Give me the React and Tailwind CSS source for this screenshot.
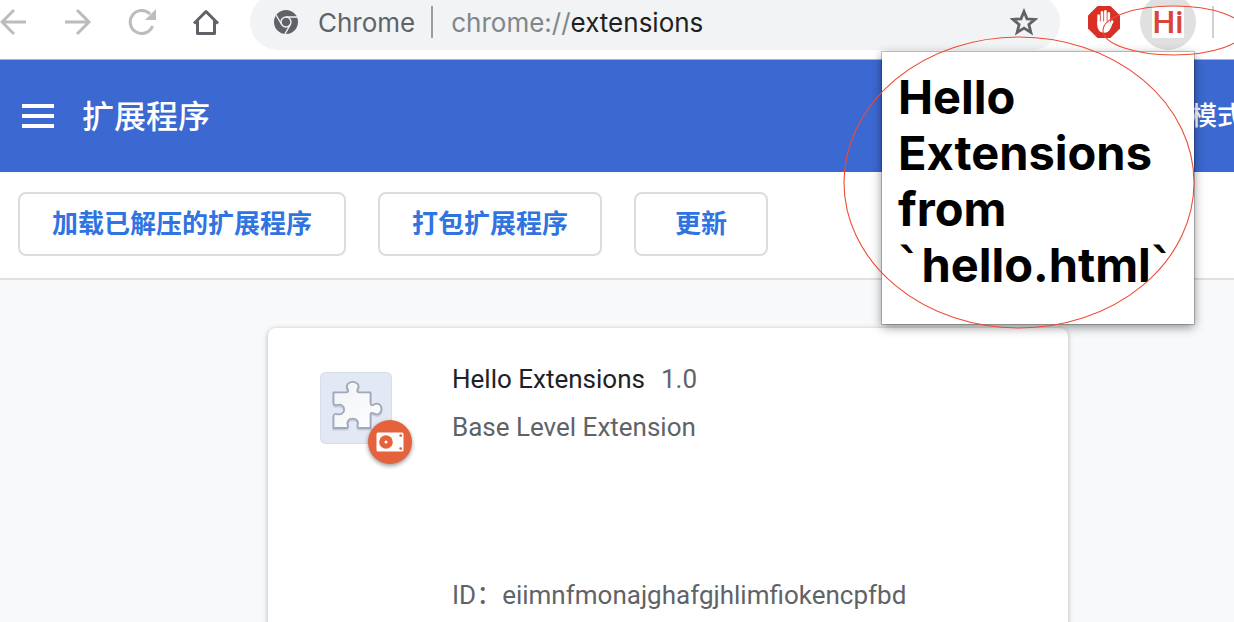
import React from 'react';

const actions = [
  { label: '加载已解压的扩展程序' },
  { label: '打包扩展程序' },
  { label: '更新' },
];

const NavIcon = ({ label, className, children }) => (
  <button type="button" aria-label={label} className={`h-7 w-7 shrink-0 ${className}`}>
    <svg viewBox="0 0 28 28" className="h-7 w-7" fill="none" stroke="currentColor" strokeWidth="3">
      {children}
    </svg>
  </button>
);

const ChromeIcon = () => (
  <svg viewBox="0 0 24 24" className="h-6 w-6 shrink-0" aria-hidden="true">
    <circle cx="12" cy="12" r="12" fill="#5f6368" />
    <g fill="none" stroke="#f1f3f4" strokeWidth="1.4">
      <circle cx="12" cy="12" r="5" />
      <path d="M12 7H23M7.7 14.5L2 5M16.3 14.5L11 24" />
    </g>
  </svg>
);

const StopHandIcon = () => (
  <svg viewBox="0 0 32 32" className="h-8 w-8" aria-hidden="true">
    <path d="M9.5 0h13L32 9.5v13L22.5 32h-13L0 22.5v-13z" fill="#d93025" />
    <g stroke="#fff" strokeWidth="2.6" strokeLinecap="round" fill="none">
      <path d="M10.600 18V9.500M14 17V6.200M17.400 17V5.200M20.800 17V7.400" />
      <path d="M24.200 15.600L21 21.500" />
    </g>
    <path d="M9.300 15.500h12.800v3.300l2.400-2.300c-1.200 4.500-2.600 10.200-8 10.200-5.800 0-7.200-4.200-7.200-8.200z" fill="#fff" />
  </svg>
);

const PUZZLE_PATH =
  'M13.5 20.3H26C28.600 20.300 28.600 18.800 27.700 17.300C25.300 13.300 28.300 9.800 32.700 9.800C37.100 9.800 40.100 13.300 37.700 17.300C36.800 18.800 36.800 20.300 39.400 20.300H50.500V31C50.500 33.800 52.200 33.600 53.900 32.600C57.700 30.200 61.500 32.800 61.500 37C61.500 41.200 57.700 43.800 53.900 41.400C52.200 40.400 50.500 40.400 50.500 43V56H40C37.300 56 37.200 54.800 37.600 53.300C38.900 49.300 36.800 46.700 32.700 46.700C28.600 46.700 26.500 49.300 27.800 53.300C28.200 54.800 28.100 56 25.400 56H13.500V44.500C13.500 42 15 41.600 16.700 42.100C21 43.200 24.200 41.200 24.200 37.500C24.200 33.800 21 31.900 16.700 33C15 33.500 13.500 33.200 13.500 30.600Z';

const PuzzleIcon = () => (
  <svg viewBox="0 0 72 72" className="h-full w-full" aria-hidden="true">
    <defs>
      <linearGradient id="puzzle" x1="0" y1="0" x2="1" y2="1">
        <stop offset="0" stopColor="#eff2f7" />
        <stop offset="1" stopColor="#ffffff" />
      </linearGradient>
    </defs>
    <path d={PUZZLE_PATH} fill="#7f8fab" stroke="#7f8fab" strokeWidth="2" opacity="0.3" transform="translate(0 1.5)" />
    <path d={PUZZLE_PATH} fill="url(#puzzle)" stroke="#a1a9b8" strokeWidth="1.800" strokeLinejoin="round" />
  </svg>
);

const UnpackedBadge = () => (
  <span className="absolute -right-5 -bottom-5 flex h-11 w-11 items-center justify-center rounded-full bg-[#e4633c] shadow-[0_2px_4px_rgba(0,0,0,0.4)]">
    <svg viewBox="0 0 28 20" className="h-5 w-7" aria-hidden="true">
      <rect x="0.500" y="0.500" width="27" height="19" rx="1.500" fill="#fff" />
      <circle cx="10" cy="10" r="6.800" fill="#e4633c" />
      <circle cx="10" cy="10" r="1.500" fill="#fff" />
      <circle cx="24.700" cy="3.600" r="1.400" fill="#e4633c" />
      <circle cx="24.700" cy="16.600" r="1.400" fill="#e4633c" />
    </svg>
  </span>
);

const BrowserBar = () => (
  <div className="border-b border-[#b4b5b7] bg-white pb-[15px]">
    <div className="flex h-11 items-center">
      <nav className="flex gap-9">
        <NavIcon label="后退" className="text-[#babcbe]">
          <path d="M27 14H3M15 2L3 14L15 26" transform="translate(-1 0)" />
        </NavIcon>
        <NavIcon label="前进" className="text-[#babcbe]">
          <path d="M1 14H25M13 2L25 14L13 26" />
        </NavIcon>
        <NavIcon label="重新加载" className="text-[#babcbe]">
          <path d="M24.500 18A11.500 11.500 0 1 1 22 6" />
          <path d="M28 1V12H17z" fill="currentColor" stroke="none" />
        </NavIcon>
        <NavIcon label="主页" className="text-[#5f6368]">
          <path d="M2 15.500L14 3.500L26 15.500M5.500 13V25.500H22.500V13" strokeLinejoin="round" />
        </NavIcon>
      </nav>
      <div className="ml-[30px] flex h-14 min-w-0 flex-1 items-center rounded-full bg-[#f1f3f4] pr-[22px] pl-6 font-['Inter',sans-serif] text-[26px] leading-8">
        <ChromeIcon />
        <span className="ml-5 pt-0.5 text-[#5f6368]">Chrome</span>
        <span className="mr-[18px] ml-4 h-8 w-0.5 shrink-0 bg-[#9b9da0]" />
        <span className="pt-0.5 whitespace-nowrap text-[#80868b]">
          chrome://<span className="text-[#202124]">extensions</span>
        </span>
        <button type="button" aria-label="收藏" className="ml-auto h-7 w-7 shrink-0">
          <svg viewBox="0 0 28 28" className="h-7 w-7" fill="none" stroke="#5f6368" strokeWidth="2.800">
            <path d="M14 3.500L17 10.800L25 11.400L18.900 16.500L20.900 24.400L14 20.100L7.100 24.400L9.100 16.500L3 11.400L11 10.800Z" />
          </svg>
        </button>
      </div>
      <button type="button" aria-label="拦截广告" className="ml-7 h-8 w-8 shrink-0">
        <StopHandIcon />
      </button>
      <button type="button" className="ml-5 flex h-14 w-14 shrink-0 items-center justify-center rounded-full bg-[#e0e0e0]">
        <span className="flex h-8 w-8 justify-center bg-white font-['Roboto',sans-serif] text-[32px] leading-8 font-medium text-[#d9453b]">
          Hi
        </span>
      </button>
      <span className="mr-5 ml-4 h-8 w-0.5 shrink-0 bg-[#cfd0d2]" />
    </div>
  </div>
);

const Backtick = () => <span className="font-['DejaVu_Sans',sans-serif] leading-none">`</span>;

const Popup = () => (
  <div className="absolute top-[52px] right-10 w-[312px] bg-white px-4 pt-[17px] pb-[31px] shadow-[0_0_0_1px_rgba(0,0,0,0.2),0_3px_10px_rgba(0,0,0,0.45)]">
    <h1 className="font-['Inter',sans-serif] text-[47px] leading-14 font-bold whitespace-nowrap text-black">
      Hello
      <br />
      Extensions
      <br />
      from
      <br />
      <Backtick />
      hello.html
      <Backtick />
    </h1>
  </div>
);

const Annotations = () => (
  <svg
    viewBox="834 0 400 340"
    className="pointer-events-none absolute top-0 right-0 h-[340px] w-[400px]"
    fill="none"
    stroke="#ee4b33"
    strokeWidth="1.100"
    aria-hidden="true"
  >
    <ellipse cx="1019" cy="182.500" rx="175" ry="145.500" />
    <ellipse cx="1173.500" cy="30.500" rx="70.500" ry="24.500" />
  </svg>
);

export default function App() {
  return (
    <div className="relative flex h-screen flex-col overflow-hidden bg-[#f8f9fa] font-['Roboto','Noto_Sans_CJK_SC',sans-serif]">
      <BrowserBar />
      <header className="flex h-28 shrink-0 items-center bg-[#3c69d1] text-white">
        <button type="button" aria-label="主菜单" className="ml-[22px] flex w-8 flex-col gap-1.5">
          <span className="h-1 w-full bg-white" />
          <span className="h-1 w-full bg-white" />
          <span className="h-1 w-full bg-white" />
        </button>
        <h2 className="ml-7 pt-0.5 text-[32px] leading-10 font-medium">扩展程序</h2>
        <span className="ml-auto w-[43px] text-[26px] leading-10 font-medium whitespace-nowrap">模式</span>
      </header>
      <div className="flex shrink-0 gap-8 border-b-2 border-[#e0e0e0] bg-white px-[18px] pt-5 pb-[22px]">
        {actions.map(({ label }) => (
          <button
            key={label}
            type="button"
            className="h-16 min-w-[134px] rounded-lg border-2 border-[#dadce0] px-8 text-[26px] font-bold whitespace-nowrap text-[#2f74e0]"
          >
            {label}
          </button>
        ))}
      </div>
      <main className="flex-1 pt-12 pr-[166px] pl-[268px]">
        <article className="flex h-[400px] rounded-lg bg-white px-[52px] pt-[35px] text-[26px] leading-8 text-[#5f6368] shadow-[0_1px_5px_rgba(60,64,67,0.4)]">
          <div className="relative mt-[9px] h-[72px] w-[72px] shrink-0 rounded-md bg-[#e2e9f4] inset-ring inset-ring-[#d5dde9]">
            <PuzzleIcon />
            <UnpackedBadge />
          </div>
          <div className="ml-15 min-w-0">
            <div className="flex gap-4">
              <h3 className="text-[#202124]">Hello Extensions</h3>
              <span>1.0</span>
            </div>
            <p className="mt-4">Base Level Extension</p>
            <p className="mt-34 whitespace-nowrap">ID：eiimnfmonajghafgjhlimfiokencpfbd</p>
          </div>
        </article>
      </main>
      <Popup />
      <Annotations />
    </div>
  );
}
